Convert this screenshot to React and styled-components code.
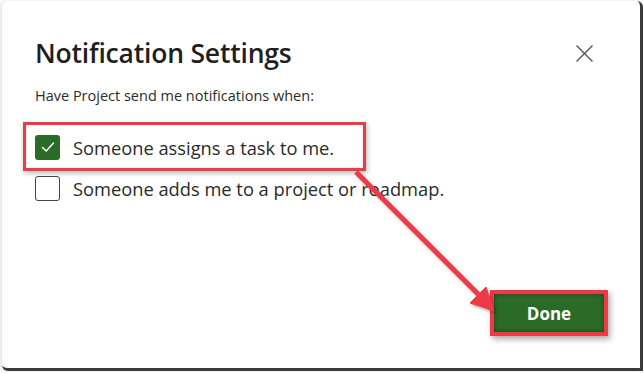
import React from "react";
import styled, { createGlobalStyle } from "styled-components";

const GlobalStyle = createGlobalStyle`
  html, body {
    margin: 0;
    padding: 0;
    background: #ffffff;
  }
  body {
    font-family: "Open Sans", "Noto Sans", sans-serif;
    color: #242424;
  }
`;

const highlight = "#ec3b47";
const green = "#2c6a28";

const Screen = styled.div`
  position: relative;
  width: 644px;
  height: 373px;
  overflow: hidden;
`;

const Dialog = styled.div`
  position: relative;
  box-sizing: border-box;
  margin: 1px 0 0 2px;
  width: 641px;
  height: 370px;
  background: #fff;
  border-radius: 6px 6px 0 6px;
  border-right: 3px solid #3c3c3c;
  border-bottom: 3px solid #3c3c3c;
  box-shadow: -2px 0 4px rgba(0, 0, 0, 0.12);
  padding: 34px 32px 0 33px;
  display: flex;
  flex-direction: column;
`;

const Header = styled.div`
  display: flex;
  align-items: center;
  justify-content: space-between;
  padding-right: 14px;
`;

const Title = styled.h1`
  margin: 0;
  font-size: 26.5px;
  font-weight: 600;
  line-height: 36px;
  color: #1f1f1f;
  letter-spacing: -0.2px;
`;

const CloseButton = styled.button`
  border: 0;
  background: none;
  padding: 0;
  width: 20px;
  height: 20px;
  display: flex;
  align-items: center;
  justify-content: center;
`;

const Intro = styled.p`
  margin: 15px 0 0;
  font-size: 14.5px;
  line-height: 20px;
  color: #2c2c2c;
`;

const Options = styled.div`
  display: flex;
  flex-direction: column;
  align-items: flex-start;
  gap: 15px;
  margin-top: 28px;
`;

const Row = styled.label`
  position: relative;
  display: flex;
  align-items: center;
  gap: 13px;
  height: 26px;
  font-size: 18.3px;
  color: #2a2a2a;
  white-space: nowrap;

  ${(p) =>
    p.$highlighted &&
    `
    &::before {
      content: "";
      position: absolute;
      top: -12px;
      bottom: -11px;
      left: -12px;
      right: -32px;
      border: 3px solid ${highlight};
      box-shadow: 1px 2px 5px rgba(0, 0, 0, 0.3), inset 0 0 3px rgba(0, 0, 0, 0.15);
      pointer-events: none;
    }
  `}
`;

const Box = styled.span`
  box-sizing: border-box;
  flex: none;
  width: 25px;
  height: 25px;
  border-radius: 3px;
  border: ${(p) => (p.$checked ? "none" : "1.5px solid #444")};
  background: ${(p) => (p.$checked ? green : "#fff")};
  display: flex;
  align-items: center;
  justify-content: center;
`;

const Footer = styled.div`
  margin-top: auto;
  margin-bottom: 32px;
  display: flex;
  justify-content: flex-end;
`;

const DoneButton = styled.button`
  box-sizing: border-box;
  width: 118px;
  height: 46px;
  border: 4px solid ${highlight};
  background: ${green};
  color: #fff;
  font-family: "Open Sans", "Noto Sans", sans-serif;
  font-size: 17px;
  font-weight: 700;
  box-shadow: 2px 3px 6px rgba(0, 0, 0, 0.35), inset 0 0 4px rgba(0, 0, 0, 0.4);
`;

const ArrowLayer = styled.svg`
  position: absolute;
  top: 0;
  left: 0;
  pointer-events: none;
`;

const CloseIcon = () => (
  <svg width="19" height="19" viewBox="0 0 19 19">
    <path d="M1.5 1.5 L17.5 17.5 M17.5 1.5 L1.5 17.5" stroke="#555" strokeWidth="1.4" />
  </svg>
);

const Check = () => (
  <svg width="16" height="16" viewBox="0 0 16 16">
    <path d="M2.5 8.5 L6.2 12 L13.5 4" fill="none" stroke="#fff" strokeWidth="1.5" strokeLinecap="round" strokeLinejoin="round" />
  </svg>
);

const options = [
  { text: "Someone assigns a task to me.", checked: true },
  { text: "Someone adds me to a project or roadmap.", checked: false },
];

export default function App() {
  return (
    <Screen>
      <GlobalStyle />
      <Dialog>
        <Header>
          <Title>Notification Settings</Title>
          <CloseButton aria-label="Close">
            <CloseIcon />
          </CloseButton>
        </Header>
        <Intro>Have Project send me notifications when:</Intro>
        <Options>
          {options.map((o) => (
            <Row key={o.text} $highlighted={o.checked}>
              <Box $checked={o.checked}>{o.checked && <Check />}</Box>
              {o.text}
            </Row>
          ))}
        </Options>
        <Footer>
          <DoneButton>Done</DoneButton>
        </Footer>
      </Dialog>
      <ArrowLayer width="644" height="373">
        <defs>
          <filter id="sh" x="-20%" y="-20%" width="140%" height="140%">
            <feDropShadow dx="1.5" dy="2" stdDeviation="1.5" floodColor="#000" floodOpacity="0.3" />
          </filter>
        </defs>
        <g filter="url(#sh)" fill={highlight} stroke={highlight}>
          <line x1="356" y1="172" x2="481" y2="297" strokeWidth="5" />
          <polygon points="494,311 470,303 486,287" strokeWidth="1" />
        </g>
      </ArrowLayer>
    </Screen>
  );
}
